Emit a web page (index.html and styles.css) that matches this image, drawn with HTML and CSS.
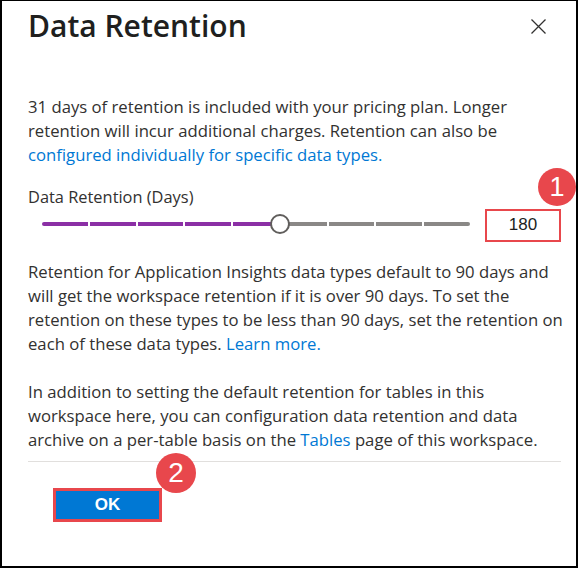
FILE: index.html
```html
<!DOCTYPE html>
<html lang="en">
<head>
<meta charset="utf-8">
<title>Data Retention</title>
<link rel="stylesheet" href="styles.css">
</head>
<body>
<div class="dialog">
  <div class="header">
    <h1 class="title">Data Retention</h1>
    <button class="close" aria-label="Close">
      <svg width="15" height="15" viewBox="0 0 15 15"><path d="M0.5 0.5 L14.5 14.5 M14.5 0.5 L0.5 14.5" stroke="#323130" stroke-width="1.3" fill="none"/></svg>
    </button>
  </div>
  <p class="text first">31 days of retention is included with your pricing plan. Longer<br>retention will incur additional charges. Retention can also be<br><a class="link" href="#">configured individually for specific data types.</a></p>
  <div class="label">Data Retention (Days)</div>
  <div class="slider-row">
    <div class="slider">
      <div class="track">
        <span class="seg on"></span><span class="seg on"></span><span class="seg on"></span><span class="seg on"></span><span class="seg on"></span>
        <span class="seg"></span><span class="seg"></span><span class="seg"></span><span class="seg"></span>
      </div>
      <span class="thumb"></span>
    </div>
    <div class="value">180</div>
    <span class="badge badge-1">1</span>
  </div>
  <p class="text second">Retention for Application Insights data types default to 90 days and<br>will get the workspace retention if it is over 90 days. To set the<br>retention on these types to be less than 90 days, set the retention on<br>each of these data types. <a class="link" href="#">Learn more.</a></p>
  <p class="text third">In addition to setting the default retention for tables in this<br>workspace here, you can configuration data retention and data<br>archive on a per-table basis on the <a class="link" href="#">Tables</a> page of this workspace.</p>
  <div class="divider"></div>
  <div class="footer">
    <button class="ok">OK<span class="badge badge-2">2</span></button>
  </div>
</div>
</body>
</html>
```
FILE: styles.css
```css
html, body {
  margin: 0;
  padding: 0;
  background: #fff;
}
.dialog {
  box-sizing: border-box;
  width: 578px;
  height: 568px;
  border-top: 1px solid #000;
  border-left: 2px solid #000;
  border-right: 2px solid #000;
  border-bottom: 2px solid #000;
  padding: 0 15px 0 26px;
  display: flex;
  flex-direction: column;
  font-family: "Segoe UI", "Open Sans", sans-serif;
  color: #323130;
}
.header {
  height: 50px;
  display: flex;
  align-items: center;
  justify-content: space-between;
}
.title {
  margin: 0;
  font-size: 30px;
  line-height: 36px;
  font-weight: 600;
  color: #201f1e;
}
.close {
  border: 0;
  background: none;
  padding: 0;
  margin-right: 15px;
  width: 15px;
  height: 15px;
  display: flex;
}
.text {
  margin: 0;
  font-size: 16.7px;
  line-height: 24px;
  white-space: nowrap;
}
.first { margin-top: 44px; }
.second { margin-top: 19px; }
.third { margin-top: 24px; }
.link {
  color: #0078d4;
  text-decoration: none;
}
.label {
  margin-top: 20px;
  font-size: 16.4px;
  line-height: 20px;
}
.slider-row {
  position: relative;
  height: 34px;
  display: flex;
  align-items: center;
  gap: 15px;
}
.slider {
  position: relative;
  margin-left: 14px;
  width: 428px;
  height: 20px;
  display: flex;
  align-items: center;
}
.track {
  width: 100%;
  height: 4px;
  display: flex;
  gap: 2px;
  border-radius: 2px;
  overflow: hidden;
}
.seg {
  flex: 1;
  background: #8a8886;
}
.seg.on {
  background: #8b2fa5;
}
.thumb {
  position: absolute;
  left: 228px;
  top: 0;
  box-sizing: border-box;
  width: 20px;
  height: 20px;
  border-radius: 50%;
  border: 2px solid #605e5c;
  background: #fff;
}
.value {
  box-sizing: border-box;
  width: 76px;
  height: 33px;
  border: 2px solid #e8474c;
  display: flex;
  align-items: center;
  justify-content: center;
  font-family: "Liberation Sans", Arial, sans-serif;
  font-size: 17px;
  color: #201f1e;
  margin-top: 2px;
}
.badge {
  position: absolute;
  display: flex;
  align-items: center;
  justify-content: center;
  border-radius: 50%;
  background: #e8474c;
  color: #fff;
  font-family: "Liberation Sans", Arial, sans-serif;
  font-weight: 400;
}
.badge-1 {
  right: -15px;
  top: -39px;
  width: 38px;
  height: 38px;
  font-size: 27px;
}
.divider {
  margin-top: 9px;
  height: 1px;
  background: #e1dfdd;
}
.footer {
  margin-top: 26px;
  display: flex;
}
.ok {
  position: relative;
  margin-left: 25px;
  box-sizing: border-box;
  width: 109px;
  height: 34px;
  border: 3px solid #e8474c;
  background: #0078d4;
  color: #fff;
  font-family: "Liberation Sans", Arial, sans-serif;
  font-weight: 700;
  font-size: 17px;
  padding: 0;
}
.badge-2 {
  left: 100px;
  top: -38px;
  width: 40px;
  height: 40px;
  font-size: 28px;
}
```
